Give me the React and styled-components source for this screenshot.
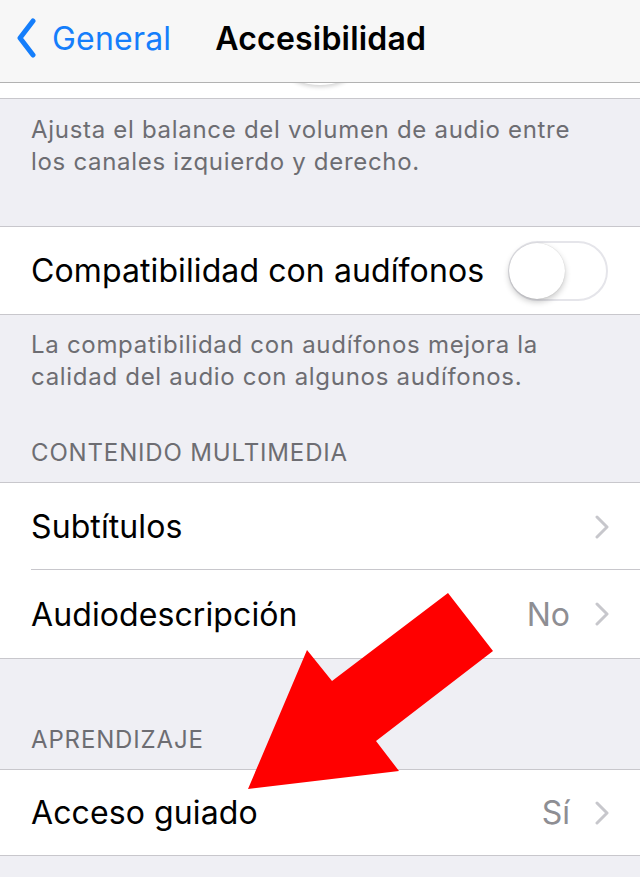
import React from 'react';
import styled, { createGlobalStyle } from 'styled-components';

const GlobalStyle = createGlobalStyle`
  html, body {
    margin: 0;
    padding: 0;
    background: #efeff4;
    font-family: Inter, "Noto Sans", "Liberation Sans", sans-serif;
    -webkit-font-smoothing: antialiased;
  }
`

const Screen = styled.div`
  position: relative;
  width: 640px;
  height: 877px;
  overflow: hidden;
  background: #efeff4;
`

const NavBar = styled.div`
  height: 76px;
  padding-bottom: 6px;
  display: flex;
  align-items: center;
  background: #f7f7f7;
  border-bottom: 1px solid #b2b2b2;
`

const BackButton = styled.div`
  display: flex;
  align-items: center;
  gap: 16px;
  padding-left: 17px;
  color: #157efb;
  font-size: 32px;
  letter-spacing: 0.2px;
`

const NavTitle = styled.div`
  margin-left: 44px;
  font-size: 32px;
  font-weight: 600;
  color: #000;
  letter-spacing: 0.2px;
`

const Group = styled.div`
  background: #fff;
  border-top: ${p => (p.$top ? '1px solid #c8c7cc' : 'none')};
  border-bottom: 1px solid #c8c7cc;
`

const SliderTail = styled.div`
  position: relative;
  height: 15px;
  overflow: hidden;
`

const KnobShadow = styled.div`
  position: absolute;
  left: 290px;
  top: -24px;
  width: 60px;
  height: 26px;
  border-radius: 50%;
  box-shadow: 0 2px 4px rgba(0, 0, 0, 0.18);
  background: #fff;
`

const Row = styled.div`
  height: ${p => p.$h || 87}px;
  display: flex;
  align-items: center;
  padding: 0 31px;
  position: relative;
  ${p => p.$sep && `
    &::after {
      content: '';
      position: absolute;
      left: 31px;
      right: 0;
      bottom: 0;
      height: 1px;
      background: #c8c7cc;
    }
  `}
`

const Label = styled.div`
  flex: 1;
  font-size: 32px;
  color: #000;
  letter-spacing: 0.1px;
`

const Value = styled.div`
  font-size: 32px;
  color: #8e8e93;
  margin-right: 25px;
`

const Footer = styled.div`
  padding: ${p => p.$pad};
  font-size: 24px;
  line-height: 32px;
  color: #6d6d72;
  letter-spacing: 0.7px;
`

const Header = styled.div`
  padding: ${p => p.$pad};
  font-size: 24px;
  line-height: 28px;
  color: #6d6d72;
  text-transform: uppercase;
  letter-spacing: 0.85px;
`

const Track = styled.div`
  width: 96px;
  height: 56px;
  border-radius: 30px;
  border: 2px solid #e5e5ea;
  background: #fff;
  position: relative;
  margin-right: 1px;
`

const Knob = styled.div`
  position: absolute;
  left: -1px;
  top: 0;
  width: 56px;
  height: 56px;
  border-radius: 50%;
  background: #fff;
  box-shadow: 0 3px 6px rgba(0, 0, 0, 0.22), 0 0 1px rgba(0, 0, 0, 0.2);
`

const Switch = () => (
  <Track>
    <Knob />
  </Track>
)

const Chevron = () => (
  <svg width="14" height="24" viewBox="0 0 14 24">
    <path d="M2 2 L12 12 L2 22" fill="none" stroke="#c7c7cc" strokeWidth="3" strokeLinecap="round" strokeLinejoin="round" />
  </svg>
)

const BackChevron = () => (
  <svg width="19" height="40" viewBox="0 0 19 40">
    <path d="M16 3 L3 20 L16 37" fill="none" stroke="#157efb" strokeWidth="5" strokeLinecap="round" strokeLinejoin="round" />
  </svg>
)

const Arrow = styled.svg`
  position: absolute;
  left: 0;
  top: 0;
  pointer-events: none;
`

const App = () => (
  <Screen>
    <GlobalStyle />
    <NavBar>
      <BackButton>
        <BackChevron />
        General
      </BackButton>
      <NavTitle>Accesibilidad</NavTitle>
    </NavBar>

    <Group>
      <SliderTail>
        <KnobShadow />
      </SliderTail>
    </Group>
    <Footer $pad="15px 31px 48px">
      Ajusta el balance del volumen de audio entre<br />
      los canales izquierdo y derecho.
    </Footer>

    <Group $top>
      <Row>
        <Label>Compatibilidad con audífonos</Label>
        <Switch />
      </Row>
    </Group>
    <Footer $pad="14px 31px 0">
      La compatibilidad con audífonos mejora la<br />
      calidad del audio con algunos audífonos.
    </Footer>

    <Header $pad="46px 31px 15px">Contenido multimedia</Header>
    <Group $top>
      <Row $sep>
        <Label>Subtítulos</Label>
        <Chevron />
      </Row>
      <Row $h={88}>
        <Label>Audiodescripción</Label>
        <Value>No</Value>
        <Chevron />
      </Row>
    </Group>

    <Header $pad="67px 31px 15px">Aprendizaje</Header>
    <Group $top>
      <Row $h={85}>
        <Label>Acceso guiado</Label>
        <Value>Sí</Value>
        <Chevron />
      </Row>
    </Group>

    <Arrow width="640" height="877" viewBox="0 0 640 877">
      <polygon
        points="248,789 307,650 332,681 448,593 493,651 376,741 399,771"
        fill="#ff0000"
      />
    </Arrow>
  </Screen>
)

export default App;
